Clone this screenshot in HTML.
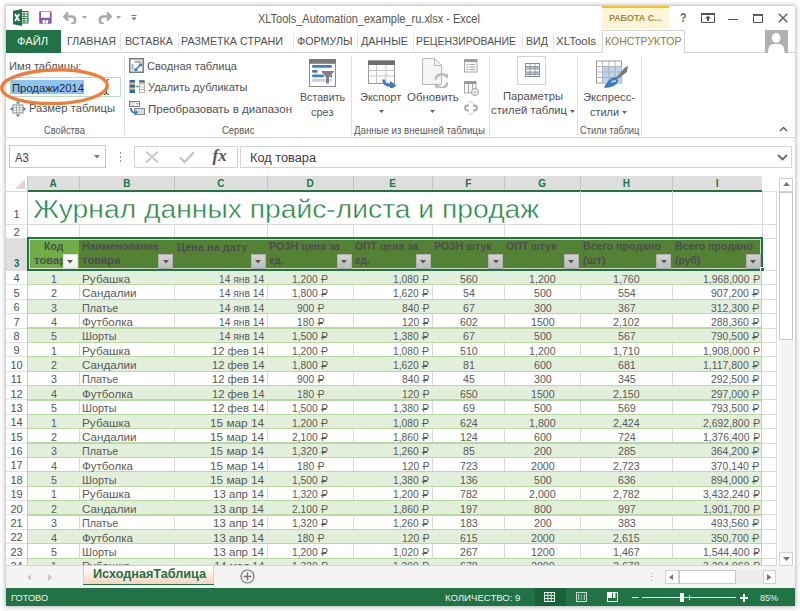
<!DOCTYPE html>
<html><head><meta charset="utf-8"><style>
html,body{margin:0;padding:0;}
body{width:800px;height:611px;overflow:hidden;position:relative;background:#fdfdfd;font-family:"Liberation Sans",sans-serif;}
body>div,body>span,body>svg{position:absolute;box-sizing:border-box;}
body>span{white-space:nowrap;transform-origin:0 0;}
.r{position:relative;font-style:normal;margin-left:0.09em;}
.r::after{content:"";position:absolute;left:-0.03em;top:0.6em;width:0.5em;height:0.085em;background:currentColor;}
</style></head><body>
<div style="left:6px;top:6px;width:789px;height:600px;background:#fff;box-shadow:0 0 4px 1px rgba(0,0,0,0.27);"></div>
<svg style="position:absolute;left:12px;top:9px" width="17" height="17" viewBox="0 0 17 17"><rect x="8.5" y="2.5" width="7.5" height="11.5" fill="#fff" stroke="#207245" stroke-width="1"/><path d="M9 5h7M9 7.3h7M9 9.6h7M9 11.9h7M12 2.5v11.5" stroke="#207245" stroke-width="0.9"/><path d="M1 1.8 L10 0 V17 L1 15.2Z" fill="#207245"/><path d="M3 5 L7.2 12 M7.2 5 L3 12" stroke="#fff" stroke-width="1.7"/></svg>
<svg style="position:absolute;left:39px;top:11px" width="13" height="13" viewBox="0 0 13 13"><rect x="0.2" y="0.2" width="12.4" height="12.6" rx="1.2" fill="#8a53b8"/><rect x="2" y="0.8" width="8.9" height="6" fill="#fff"/><path d="M3.4 9 H6 L6.2 12.6 H3.8Z M6.8 9 H9.4 L9 12.6 H6.6Z" fill="#fff"/></svg>
<svg style="position:absolute;left:63px;top:11px" width="15" height="13" viewBox="0 0 15 13"><path d="M5 1.5 L1.5 5.5 L5 9.5 M2 5.5 H9 A3.8 3.8 0 0 1 9 13 H8" fill="none" stroke="#a8a8a8" stroke-width="2.6"/></svg>
<svg style="position:absolute;left:82px;top:16px" width="5" height="3" viewBox="0 0 5 3"><path d="M0 0h5l-2.5 3z" fill="#a6a6a6"/></svg>
<svg style="position:absolute;left:97px;top:11px" width="15" height="13" viewBox="0 0 15 13"><path d="M10 1.5 L13.5 5.5 L10 9.5 M13 5.5 H6 A3.8 3.8 0 0 0 6 13 H7" fill="none" stroke="#a8a8a8" stroke-width="2.6"/></svg>
<svg style="position:absolute;left:116px;top:16px" width="5" height="3" viewBox="0 0 5 3"><path d="M0 0h5l-2.5 3z" fill="#a6a6a6"/></svg>
<svg style="position:absolute;left:131px;top:14px" width="6" height="7" viewBox="0 0 6 7"><path d="M0.5 1.5h5" stroke="#777" stroke-width="1"/><path d="M0.5 3.5h5l-2.5 3z" fill="#777"/></svg>
<span style="left:257.80px;top:11.59px;font-size:13px;line-height:13px;color:#555;transform:scaleX(0.8444);">XLTools_Automation_example_ru.xlsx - Excel</span>
<div style="left:601.5px;top:6px;width:67.5px;height:23px;background:#fdf5d8;border-top:2px solid #f1c31b;"></div>
<span style="left:608.50px;top:14.18px;font-size:9px;line-height:9px;color:#a3853a;font-weight:bold;transform:scaleX(0.9885);">РАБОТА С...</span>
<span style="left:680.00px;top:11.84px;font-size:12px;line-height:12px;color:#666;font-weight:bold;transform:scaleX(0.8867);">?</span>
<svg style="position:absolute;left:700.5px;top:13px" width="14" height="10" viewBox="0 0 14 10"><rect x="0.5" y="0.5" width="13" height="9" fill="none" stroke="#555"/><path d="M0.5 1.5h13" stroke="#555"/><path d="M7 2.5 L4 5.5 H6 V8 H8 V5.5 H10Z" fill="#555"/></svg>
<div style="left:728px;top:19px;width:9.5px;height:1.3000000000000007px;background:#555;"></div>
<svg style="position:absolute;left:753px;top:13.5px" width="10" height="9" viewBox="0 0 10 9"><rect x="0.5" y="0.5" width="9" height="8" fill="none" stroke="#555" stroke-width="1"/><path d="M0.5 1.2h9" stroke="#555" stroke-width="1.4"/></svg>
<svg style="position:absolute;left:778px;top:13px" width="10" height="10" viewBox="0 0 10 10"><path d="M0.8 0.8L9.2 9.2M9.2 0.8L0.8 9.2" stroke="#666" stroke-width="1.6"/></svg>
<div style="left:6px;top:52px;width:596px;height:1px;background:#d5d5d5;"></div>
<div style="left:684px;top:52px;width:111px;height:1px;background:#d5d5d5;"></div>
<div style="left:6px;top:29.8px;width:54.5px;height:22.999999999999996px;background:#217346;"></div>
<span style="left:17.20px;top:36.16px;font-size:11.5px;line-height:11.5px;color:#f4f8f5;transform:scaleX(0.9727);">ФАЙЛ</span>
<span style="left:67.00px;top:36.26px;font-size:11.5px;line-height:11.5px;color:#4e4e4e;transform:scaleX(0.9289);">ГЛАВНАЯ</span>
<span style="left:125.00px;top:36.26px;font-size:11.5px;line-height:11.5px;color:#4e4e4e;transform:scaleX(0.9308);">ВСТАВКА</span>
<span style="left:181.00px;top:36.26px;font-size:11.5px;line-height:11.5px;color:#4e4e4e;transform:scaleX(0.9330);">РАЗМЕТКА СТРАНИ</span>
<span style="left:296.50px;top:36.26px;font-size:11.5px;line-height:11.5px;color:#4e4e4e;transform:scaleX(0.9334);">ФОРМУЛЫ</span>
<span style="left:361.00px;top:36.26px;font-size:11.5px;line-height:11.5px;color:#4e4e4e;transform:scaleX(0.9415);">ДАННЫЕ</span>
<span style="left:416.00px;top:36.26px;font-size:11.5px;line-height:11.5px;color:#4e4e4e;transform:scaleX(0.9041);">РЕЦЕНЗИРОВАНИЕ</span>
<span style="left:526.00px;top:36.26px;font-size:11.5px;line-height:11.5px;color:#4e4e4e;transform:scaleX(0.9273);">ВИД</span>
<span style="left:556.00px;top:36.26px;font-size:11.5px;line-height:11.5px;color:#4e4e4e;transform:scaleX(0.9985);">XLTools</span>
<div style="left:120px;top:33px;width:1px;height:17px;background:#e3e3e3;"></div>
<div style="left:178px;top:33px;width:1px;height:17px;background:#e3e3e3;"></div>
<div style="left:292.5px;top:33px;width:1.0px;height:17px;background:#e3e3e3;"></div>
<div style="left:357px;top:33px;width:1px;height:17px;background:#e3e3e3;"></div>
<div style="left:412.5px;top:33px;width:1.0px;height:17px;background:#e3e3e3;"></div>
<div style="left:522px;top:33px;width:1px;height:17px;background:#e3e3e3;"></div>
<div style="left:552.5px;top:33px;width:1.0px;height:17px;background:#e3e3e3;"></div>
<div style="left:601.5px;top:29.5px;width:83.0px;height:23.5px;background:#fff;border:1px solid #d5d5d5;border-bottom:none;"></div>
<span style="left:604.75px;top:36.01px;font-size:11.8px;line-height:11.8px;color:#957a32;transform:scaleX(0.8949);">КОНСТРУКТОР</span>
<svg style="position:absolute;left:765px;top:29.5px" width="23" height="23" viewBox="0 0 23 23"><rect width="23" height="23" fill="#b1b1b1"/><ellipse cx="11.2" cy="8" rx="4.3" ry="5" fill="#fff"/><path d="M3 23 C3 16.5 5 14 9 14 H13.5 C17.5 14 19.5 16.5 19.5 23Z" fill="#fff"/></svg>
<div style="left:6px;top:137px;width:789px;height:1px;background:#d5d5d5;"></div>
<div style="left:123.5px;top:56px;width:1.0px;height:79px;background:#e1e1e1;"></div>
<div style="left:351px;top:56px;width:1px;height:79px;background:#e1e1e1;"></div>
<div style="left:488.5px;top:56px;width:1.0px;height:79px;background:#e1e1e1;"></div>
<div style="left:576.5px;top:56px;width:1.0px;height:79px;background:#e1e1e1;"></div>
<div style="left:640.5px;top:56px;width:1.0px;height:79px;background:#e1e1e1;"></div>
<span style="left:9.00px;top:61.29px;font-size:11px;line-height:11px;color:#525252;transform:scaleX(1.0162);">Имя таблицы:</span>
<div style="left:9.5px;top:77px;width:111.5px;height:20px;border:1px solid #b9dcc4;background:#fff;"></div>
<div style="left:10.5px;top:80px;width:73.5px;height:13.5px;background:#8fc4f2;"></div>
<span style="left:11.60px;top:81.58px;font-size:11.6px;line-height:11.6px;color:#1e2a3a;transform:scaleX(0.9710);">Продажи2014</span>
<span style="left:28.50px;top:103.49px;font-size:11px;line-height:11px;color:#525252;transform:scaleX(1.0193);">Размер таблицы</span>
<svg style="position:absolute;left:10px;top:101px" width="16" height="16" viewBox="0 0 16 16"><rect x="3" y="4" width="10" height="8" fill="#fff" stroke="#666" stroke-width="0.8"/><path d="M3 6.5h10M3 9h10M6.5 4v8M9.5 4v8" stroke="#888" stroke-width="0.6"/><path d="M8 0l2 2.5H6zM8 16l2-2.5H6zM0 8l2.5-2v4zM16 8l-2.5-2v4z" fill="#2e75b6"/></svg>
<span style="left:43.60px;top:125.96px;font-size:10.2px;line-height:10.2px;color:#5a5a5a;transform:scaleX(0.9132);">Свойства</span>
<svg style="position:absolute;left:103px;top:79px" width="7" height="16" viewBox="0 0 7 16"><path d="M1 0.5 Q3.5 0.5 3.5 2.5 Q3.5 0.5 6 0.5 M3.5 2.5V13.5 M1 15.5 Q3.5 15.5 3.5 13.5 Q3.5 15.5 6 15.5" fill="none" stroke="#333" stroke-width="1"/></svg>
<svg style="position:absolute;left:0px;top:66px" width="112" height="42" viewBox="0 0 112 42"><ellipse cx="54.5" cy="20.8" rx="52.8" ry="16.8" transform="rotate(-1.5 54.5 20.8)" fill="none" stroke="#ee7d3a" stroke-width="3.3"/></svg>
<span style="left:147.00px;top:60.89px;font-size:11px;line-height:11px;color:#525252;transform:scaleX(1.0114);">Сводная таблица</span>
<span style="left:147.50px;top:82.49px;font-size:11px;line-height:11px;color:#525252;transform:scaleX(1.0016);">Удалить дубликаты</span>
<span style="left:148.00px;top:103.59px;font-size:11px;line-height:11px;color:#525252;transform:scaleX(1.0452);">Преобразовать в диапазон</span>
<span style="left:221.60px;top:125.96px;font-size:10.2px;line-height:10.2px;color:#5a5a5a;transform:scaleX(0.9276);">Сервис</span>
<svg style="position:absolute;left:129px;top:58px" width="15" height="15" viewBox="0 0 15 15"><rect x="0.75" y="0.75" width="13.5" height="13.5" fill="#fff" stroke="#7a7a7a" stroke-width="1.5"/><rect x="5.5" y="2.5" width="7" height="2.5" fill="#b3b3b3"/><rect x="2.5" y="6" width="2" height="6.5" fill="#b3b3b3"/><path d="M6.5 12 L11.5 6.5" stroke="#2e75b6" stroke-width="1.4"/><path d="M5.5 9.5 L5.5 13 L9 13Z M9.5 5.5 L13 5.5 L13 9Z" fill="#2e75b6"/></svg>
<svg style="position:absolute;left:129px;top:80px" width="16" height="13" viewBox="0 0 16 13"><rect x="0.5" y="0" width="5.5" height="13" fill="#2f6db3"/><rect x="0.5" y="2.6" width="5.5" height="2" fill="#f4c064"/><rect x="0.5" y="7.6" width="5.5" height="2" fill="#f4c064"/><rect x="10.3" y="0.3" width="5.2" height="12.4" fill="#fff" stroke="#8a8a8a" stroke-width="0.6"/><rect x="10.3" y="0.3" width="5.2" height="2.4" fill="#2f6db3"/><rect x="10.3" y="2.7" width="5.2" height="2" fill="#f4c064"/><path d="M10.3 7h5.2M10.3 9.5h5.2" stroke="#8a8a8a" stroke-width="0.6"/><path d="M6.5 6.5h3" stroke="#2e75b6" stroke-width="0.8"/><path d="M9.8 6.5 L8.3 5.3 V7.7Z" fill="#2e75b6"/></svg>
<svg style="position:absolute;left:129px;top:101px" width="16" height="14" viewBox="0 0 16 14"><rect x="0.5" y="0.5" width="10" height="5" fill="#fff" stroke="#7a7a7a"/><rect x="1.2" y="1.2" width="4.5" height="3.6" fill="#c9dcf0"/><path d="M7 2.3h2.5L8.25 3.8Z" fill="#555"/><rect x="5.5" y="7.5" width="10" height="6" fill="#c9dcf0" stroke="#8a8a8a"/><path d="M2 7 Q2 12.5 7.5 11.5" fill="none" stroke="#2e75b6" stroke-width="1.8"/><path d="M9 11.3 L6.5 9 L6.5 13.8Z" fill="#2e75b6"/></svg>
<svg style="position:absolute;left:309px;top:59px" width="27" height="28" viewBox="0 0 27 28"><rect x="0.5" y="0.5" width="26" height="27" fill="#fff" stroke="#8c8c8c"/><rect x="0" y="0" width="27" height="4.8" fill="#7a7a7a"/><rect x="3" y="6" width="20" height="2.8" rx="1.2" fill="#3f7cc2"/><rect x="3" y="11" width="5.5" height="2.8" rx="1.2" fill="#3f7cc2"/><rect x="3" y="15.5" width="12" height="2.8" rx="1.2" fill="#3f7cc2"/><rect x="21" y="15.5" width="2" height="2.8" fill="#3f7cc2"/><rect x="3" y="20" width="20" height="2.8" rx="1.2" fill="#bcd2ec"/><path d="M10.5 11.5 H26 L20.5 18 V25 H16.5 V18 Z" fill="#fff"/><path d="M12 12 H25.5 L20 18.3 V24.5 H17 V18.3 Z" fill="#808080"/></svg>
<span style="left:300.10px;top:92.43px;font-size:11.3px;line-height:11.3px;color:#525252;transform:scaleX(0.9416);">Вставить</span>
<span style="left:311.40px;top:106.73px;font-size:11.3px;line-height:11.3px;color:#525252;transform:scaleX(0.9718);">срез</span>
<svg style="position:absolute;left:367px;top:60px" width="31" height="28" viewBox="0 0 31 28"><rect x="1.5" y="1" width="26" height="22.5" fill="#fff" stroke="#9a9a9a"/><rect x="1" y="0.5" width="27" height="4.5" fill="#6d6d6d"/><path d="M1.5 10.5h26M1.5 16h26M9.5 5v18.5M19 5v18.5" stroke="#c4c4c4" stroke-width="1"/><path d="M16.5 19.5 Q17 25.5 24 25.5" fill="none" stroke="#3b7dc4" stroke-width="3"/><path d="M23 21 L29.5 25.5 L23 30Z" fill="#3b7dc4"/></svg>
<span style="left:360.30px;top:92.43px;font-size:11.3px;line-height:11.3px;color:#525252;transform:scaleX(0.9704);">Экспорт</span>
<svg style="position:absolute;left:378.7px;top:110px" width="5" height="3" viewBox="0 0 5 3"><path d="M0 0h5l-2.5 3z" fill="#666"/></svg>
<svg style="position:absolute;left:422px;top:58px" width="26" height="30" viewBox="0 0 26 30"><path d="M0.5 0.5 H12.5 L19.5 7.5 V26.5 H0.5Z" fill="#f6f4f8" stroke="#b8b8b8"/><path d="M12.5 0.5V7.5H19.5" fill="none" stroke="#b8b8b8"/><path d="M13.5 21.5 A6 6 0 0 1 24.5 19" fill="none" stroke="#bdbdbd" stroke-width="2.6"/><path d="M25.5 24 A6 6 0 0 1 14.5 27" fill="none" stroke="#bdbdbd" stroke-width="2.6"/><path d="M22 17 L26 15.5 L26 21Z M17 29 L13 30 L13 24.5Z" fill="#bdbdbd"/></svg>
<span style="left:406.70px;top:92.43px;font-size:11.3px;line-height:11.3px;color:#525252;transform:scaleX(1.0124);">Обновить</span>
<svg style="position:absolute;left:429.8px;top:110px" width="5" height="3" viewBox="0 0 5 3"><path d="M0 0h5l-2.5 3z" fill="#666"/></svg>
<svg style="position:absolute;left:464px;top:59px" width="14" height="14" viewBox="0 0 14 14"><rect x="0.5" y="0.5" width="12.5" height="12.5" fill="#f7f7f7" stroke="#a8a8a8"/><rect x="0.5" y="0.5" width="12.5" height="2.5" fill="#9a9a9a"/><path d="M2.5 5.5h1.5M2.5 8h1.5M2.5 10.5h1.5M5.5 5.5h5.5M5.5 8h5.5M5.5 10.5h5.5" stroke="#a8a8a8" stroke-width="1"/></svg>
<svg style="position:absolute;left:464px;top:81px" width="15" height="15" viewBox="0 0 15 15"><rect x="0.5" y="0.5" width="11.5" height="11.5" fill="#f7f7f7" stroke="#a8a8a8"/><rect x="0.5" y="0.5" width="11.5" height="2.5" fill="#9a9a9a"/><path d="M4.5 3v9M8.5 3v9" stroke="#a8a8a8"/><circle cx="11" cy="11" r="3.5" fill="#fff" stroke="#a0a0a0"/><path d="M7.5 11h7M11 7.5v7" stroke="#b0b0b0" stroke-width="0.7"/></svg>
<svg style="position:absolute;left:464px;top:100px" width="14" height="16" viewBox="0 0 14 16"><path d="M5 5.5 H3.5 A2.5 2.5 0 0 0 3.5 10.5 H5 M9 5.5 H10.5 A2.5 2.5 0 0 1 10.5 10.5 H9" fill="none" stroke="#a8a8a8" stroke-width="1.8"/><path d="M4 1.5l1.5 2M7 0.5v2.5M10 1.5l-1.5 2M4 14.5l1.5-2M7 15.5v-2.5M10 14.5l-1.5-2" stroke="#b5b5b5" stroke-width="0.8"/></svg>
<span style="left:354.00px;top:125.96px;font-size:10.2px;line-height:10.2px;color:#5a5a5a;transform:scaleX(0.9488);">Данные из внешней таблицы</span>
<div style="left:517.3px;top:56px;width:28.5px;height:28.5px;border:1px solid #d4d4d4;background:#fff;"></div>
<svg style="position:absolute;left:525px;top:63px" width="15" height="14" viewBox="0 0 15 14"><rect x="0.5" y="0.5" width="14" height="13" fill="#fff" stroke="#8a8a8a"/><rect x="0.5" y="3.5" width="14" height="2.5" fill="#a9c6e8"/><rect x="0.5" y="9" width="14" height="2.5" fill="#a9c6e8"/><path d="M0.5 3.5h14M0.5 6h14M0.5 9h14M0.5 11.5h14M5 0.5v13M10 0.5v13" stroke="#8a8a8a" stroke-width="0.8"/></svg>
<span style="left:503.00px;top:91.03px;font-size:11.3px;line-height:11.3px;color:#525252;transform:scaleX(0.9961);">Параметры</span>
<span style="left:491.00px;top:105.43px;font-size:11.3px;line-height:11.3px;color:#525252;transform:scaleX(0.9981);">стилей таблиц</span>
<svg style="position:absolute;left:569.5px;top:109.5px" width="5" height="3" viewBox="0 0 5 3"><path d="M0 0h5l-2.5 3z" fill="#666"/></svg>
<svg style="position:absolute;left:596px;top:60px" width="33" height="29" viewBox="0 0 33 29"><rect x="0.5" y="1" width="25" height="22" fill="#fff" stroke="#9a9a9a"/><rect x="6.5" y="6.5" width="19" height="16.5" fill="#bdd5ee"/><path d="M0.5 6.5h25M0.5 12h25M0.5 17.5h25M6.5 1v22M12.8 1v22M19.1 1v22" stroke="#a8a8a8" stroke-width="0.8"/><path d="M28 8.5 L32 5.5 L31 12 L21 19.5 L19.5 18Z" fill="#7a7a7a"/><path d="M19 17 L22.5 20.5 Q20 28 8 28 Q12 18 19 17Z" fill="#3b7dc4"/><path d="M15.5 22.5 Q17.5 20 20 21.5" fill="none" stroke="#fff" stroke-width="1.2"/></svg>
<span style="left:582.60px;top:92.43px;font-size:11.3px;line-height:11.3px;color:#525252;transform:scaleX(0.9887);">Экспресс-</span>
<span style="left:590.00px;top:107.43px;font-size:11.3px;line-height:11.3px;color:#525252;transform:scaleX(0.9653);">стили</span>
<svg style="position:absolute;left:622px;top:111px" width="5" height="3" viewBox="0 0 5 3"><path d="M0 0h5l-2.5 3z" fill="#666"/></svg>
<span style="left:580.00px;top:125.96px;font-size:10.2px;line-height:10.2px;color:#5a5a5a;transform:scaleX(0.9093);">Стили таблиц</span>
<svg style="position:absolute;left:779px;top:126px" width="9" height="6" viewBox="0 0 9 6"><path d="M1 5L4.5 1.5L8 5" fill="none" stroke="#555" stroke-width="1.3"/></svg>
<div style="left:9.4px;top:145.3px;width:96.39999999999999px;height:22.5px;border:1px solid #c6c6c6;background:#fff;"></div>
<span style="left:14.60px;top:151.74px;font-size:12px;line-height:12px;color:#444;transform:scaleX(0.9470);">A3</span>
<svg style="position:absolute;left:93.5px;top:155px" width="6" height="3.5" viewBox="0 0 6 3.5"><path d="M0 0h6l-3 3.5z" fill="#777"/></svg>
<div style="left:119.5px;top:152px;width:1.5px;height:1.5px;background:#999;"></div>
<div style="left:119.5px;top:156px;width:1.5px;height:1.5px;background:#999;"></div>
<div style="left:119.5px;top:160px;width:1.5px;height:1.5px;background:#999;"></div>
<div style="left:134px;top:145.5px;width:103.5px;height:22.0px;border:1px solid #d5d5d5;background:#fff;"></div>
<svg style="position:absolute;left:145px;top:151px" width="14" height="12" viewBox="0 0 14 12"><path d="M1 0.5L13 11.5M13 0.5L1 11.5" stroke="#c6c6c6" stroke-width="1.9"/></svg>
<svg style="position:absolute;left:179px;top:151px" width="16" height="13" viewBox="0 0 16 13"><path d="M1 6.5L5.5 11L15 1" fill="none" stroke="#c6c6c6" stroke-width="2.3"/></svg>
<span style="left:212.5px;top:146px;font-family:'Liberation Serif',serif;font-style:italic;font-weight:bold;font-size:17px;line-height:20px;color:#555;">fx</span>
<div style="left:240px;top:145.5px;width:552px;height:22.0px;border:1px solid #d5d5d5;background:#fff;"></div>
<span style="left:250.00px;top:151.94px;font-size:12px;line-height:12px;color:#3c3c3c;transform:scaleX(1.0639);">Код товара</span>
<svg style="position:absolute;left:777px;top:154px" width="11" height="7" viewBox="0 0 11 7"><path d="M1 1L5.5 5.5L10 1" fill="none" stroke="#666" stroke-width="1.8"/></svg>
<div style="left:27px;top:176px;width:735px;height:14px;background:#dedede;"></div>
<div style="left:78.5px;top:176px;width:1.0px;height:14px;background:#c4c4c4;"></div>
<div style="left:174.0px;top:176px;width:1.0px;height:14px;background:#c4c4c4;"></div>
<div style="left:266.5px;top:176px;width:1.0px;height:14px;background:#c4c4c4;"></div>
<div style="left:352.5px;top:176px;width:1.0px;height:14px;background:#c4c4c4;"></div>
<div style="left:431.5px;top:176px;width:1.0px;height:14px;background:#c4c4c4;"></div>
<div style="left:504.0px;top:176px;width:1.0px;height:14px;background:#c4c4c4;"></div>
<div style="left:579.5px;top:176px;width:1.0px;height:14px;background:#c4c4c4;"></div>
<div style="left:672.0px;top:176px;width:1.0px;height:14px;background:#c4c4c4;"></div>
<div style="left:27px;top:190px;width:735px;height:2px;background:#217346;"></div>
<div style="left:762px;top:176px;width:14px;height:15px;background:#fff;"></div>
<div style="left:762px;top:190.5px;width:14px;height:1.0px;background:#e1e1e1;"></div>
<span style="left:49.39px;top:178.53px;font-size:10px;line-height:10px;color:#217346;font-weight:bold;">A</span>
<span style="left:123.14px;top:178.53px;font-size:10px;line-height:10px;color:#217346;font-weight:bold;">B</span>
<span style="left:217.14px;top:178.53px;font-size:10px;line-height:10px;color:#217346;font-weight:bold;">C</span>
<span style="left:306.39px;top:178.53px;font-size:10px;line-height:10px;color:#217346;font-weight:bold;">D</span>
<span style="left:389.16px;top:178.53px;font-size:10px;line-height:10px;color:#217346;font-weight:bold;">E</span>
<span style="left:465.20px;top:178.53px;font-size:10px;line-height:10px;color:#217346;font-weight:bold;">F</span>
<span style="left:538.36px;top:178.53px;font-size:10px;line-height:10px;color:#217346;font-weight:bold;">G</span>
<span style="left:622.64px;top:178.53px;font-size:10px;line-height:10px;color:#217346;font-weight:bold;">H</span>
<span style="left:715.86px;top:178.53px;font-size:10px;line-height:10px;color:#217346;font-weight:bold;">I</span>
<div style="left:6px;top:190.5px;width:21px;height:1.0px;background:#dadada;"></div>
<svg style="position:absolute;left:15px;top:179px" width="10" height="10" viewBox="0 0 10 10"><path d="M10 0V10H0Z" fill="#d9d9d9"/></svg>
<div style="left:26.5px;top:176px;width:1.0px;height:389.5px;background:#c6c6c6;"></div>
<div style="left:6px;top:238px;width:20.5px;height:32.5px;background:#dedede;"></div>
<div style="left:6px;top:223.5px;width:20.5px;height:1.0px;background:#e3e3e3;"></div>
<span style="left:13.44px;top:208.89px;font-size:11px;line-height:11px;color:#505050;">1</span>
<div style="left:6px;top:237.5px;width:20.5px;height:1.0px;background:#e3e3e3;"></div>
<span style="left:13.44px;top:226.59px;font-size:11px;line-height:11px;color:#505050;">2</span>
<span style="left:13.91px;top:258.29px;font-size:11px;line-height:11px;color:#217346;font-weight:bold;transform:scaleX(0.8800);">3</span>
<div style="left:6px;top:284.38px;width:20.5px;height:1.0px;background:#e3e3e3;"></div>
<span style="left:13.44px;top:273.47px;font-size:11px;line-height:11px;color:#505050;">4</span>
<div style="left:6px;top:298.76px;width:20.5px;height:1.0px;background:#e3e3e3;"></div>
<span style="left:13.44px;top:287.85px;font-size:11px;line-height:11px;color:#505050;">5</span>
<div style="left:6px;top:313.14px;width:20.5px;height:1.0px;background:#e3e3e3;"></div>
<span style="left:13.44px;top:302.23px;font-size:11px;line-height:11px;color:#505050;">6</span>
<div style="left:6px;top:327.52px;width:20.5px;height:1.0px;background:#e3e3e3;"></div>
<span style="left:13.44px;top:316.61px;font-size:11px;line-height:11px;color:#505050;">7</span>
<div style="left:6px;top:341.9px;width:20.5px;height:1.0px;background:#e3e3e3;"></div>
<span style="left:13.44px;top:330.99px;font-size:11px;line-height:11px;color:#505050;">8</span>
<div style="left:6px;top:356.28px;width:20.5px;height:1.0px;background:#e3e3e3;"></div>
<span style="left:13.44px;top:345.37px;font-size:11px;line-height:11px;color:#505050;">9</span>
<div style="left:6px;top:370.66px;width:20.5px;height:1.0px;background:#e3e3e3;"></div>
<span style="left:10.38px;top:359.75px;font-size:11px;line-height:11px;color:#505050;">10</span>
<div style="left:6px;top:385.04px;width:20.5px;height:1.0px;background:#e3e3e3;"></div>
<span style="left:10.79px;top:374.13px;font-size:11px;line-height:11px;color:#505050;">11</span>
<div style="left:6px;top:399.42px;width:20.5px;height:1.0px;background:#e3e3e3;"></div>
<span style="left:10.38px;top:388.51px;font-size:11px;line-height:11px;color:#505050;">12</span>
<div style="left:6px;top:413.8px;width:20.5px;height:1.0px;background:#e3e3e3;"></div>
<span style="left:10.38px;top:402.89px;font-size:11px;line-height:11px;color:#505050;">13</span>
<div style="left:6px;top:428.18px;width:20.5px;height:1.0px;background:#e3e3e3;"></div>
<span style="left:10.38px;top:417.27px;font-size:11px;line-height:11px;color:#505050;">14</span>
<div style="left:6px;top:442.56px;width:20.5px;height:1.0px;background:#e3e3e3;"></div>
<span style="left:10.38px;top:431.65px;font-size:11px;line-height:11px;color:#505050;">15</span>
<div style="left:6px;top:456.94px;width:20.5px;height:1.0px;background:#e3e3e3;"></div>
<span style="left:10.38px;top:446.03px;font-size:11px;line-height:11px;color:#505050;">16</span>
<div style="left:6px;top:471.32000000000005px;width:20.5px;height:1.0px;background:#e3e3e3;"></div>
<span style="left:10.38px;top:460.41px;font-size:11px;line-height:11px;color:#505050;">17</span>
<div style="left:6px;top:485.70000000000005px;width:20.5px;height:1.0px;background:#e3e3e3;"></div>
<span style="left:10.38px;top:474.79px;font-size:11px;line-height:11px;color:#505050;">18</span>
<div style="left:6px;top:500.08000000000004px;width:20.5px;height:1.0px;background:#e3e3e3;"></div>
<span style="left:10.38px;top:489.17px;font-size:11px;line-height:11px;color:#505050;">19</span>
<div style="left:6px;top:514.46px;width:20.5px;height:1.0px;background:#e3e3e3;"></div>
<span style="left:10.38px;top:503.55px;font-size:11px;line-height:11px;color:#505050;">20</span>
<div style="left:6px;top:528.84px;width:20.5px;height:1.0px;background:#e3e3e3;"></div>
<span style="left:10.38px;top:517.93px;font-size:11px;line-height:11px;color:#505050;">21</span>
<div style="left:6px;top:543.22px;width:20.5px;height:1.0px;background:#e3e3e3;"></div>
<span style="left:10.38px;top:532.31px;font-size:11px;line-height:11px;color:#505050;">22</span>
<div style="left:6px;top:557.6px;width:20.5px;height:1.0px;background:#e3e3e3;"></div>
<span style="left:10.38px;top:546.69px;font-size:11px;line-height:11px;color:#505050;">23</span>
<div style="left:6px;top:571.98px;width:20.5px;height:1.0px;background:#e3e3e3;"></div>
<span style="left:10.38px;top:561.07px;font-size:11px;line-height:11px;color:#505050;">24</span>
<div style="left:27px;top:223.5px;width:749px;height:1.0px;background:#d9d9d9;"></div>
<div style="left:27px;top:237.5px;width:749px;height:1.0px;background:#d9d9d9;"></div>
<div style="left:579.5px;top:191px;width:1.0px;height:33px;background:#d9d9d9;"></div>
<div style="left:672.0px;top:191px;width:1.0px;height:33px;background:#d9d9d9;"></div>
<div style="left:761.5px;top:191px;width:1.0px;height:33px;background:#d9d9d9;"></div>
<div style="left:775.5px;top:191px;width:1.0px;height:33px;background:#d9d9d9;"></div>
<div style="left:78.5px;top:224px;width:1.0px;height:14px;background:#d9d9d9;"></div>
<div style="left:174.0px;top:224px;width:1.0px;height:14px;background:#d9d9d9;"></div>
<div style="left:266.5px;top:224px;width:1.0px;height:14px;background:#d9d9d9;"></div>
<div style="left:352.5px;top:224px;width:1.0px;height:14px;background:#d9d9d9;"></div>
<div style="left:431.5px;top:224px;width:1.0px;height:14px;background:#d9d9d9;"></div>
<div style="left:504.0px;top:224px;width:1.0px;height:14px;background:#d9d9d9;"></div>
<div style="left:579.5px;top:224px;width:1.0px;height:14px;background:#d9d9d9;"></div>
<div style="left:672.0px;top:224px;width:1.0px;height:14px;background:#d9d9d9;"></div>
<div style="left:761.5px;top:224px;width:1.0px;height:14px;background:#d9d9d9;"></div>
<div style="left:775.5px;top:224px;width:1.0px;height:14px;background:#d9d9d9;"></div>
<div style="left:775.5px;top:238px;width:1.0px;height:327.5px;background:#d9d9d9;"></div>
<div style="left:762px;top:270.0px;width:14px;height:1.0px;background:#d9d9d9;"></div>
<div style="left:762px;top:284.38px;width:14px;height:1.0px;background:#d9d9d9;"></div>
<div style="left:762px;top:298.76px;width:14px;height:1.0px;background:#d9d9d9;"></div>
<div style="left:762px;top:313.14px;width:14px;height:1.0px;background:#d9d9d9;"></div>
<div style="left:762px;top:327.52px;width:14px;height:1.0px;background:#d9d9d9;"></div>
<div style="left:762px;top:341.9px;width:14px;height:1.0px;background:#d9d9d9;"></div>
<div style="left:762px;top:356.28px;width:14px;height:1.0px;background:#d9d9d9;"></div>
<div style="left:762px;top:370.66px;width:14px;height:1.0px;background:#d9d9d9;"></div>
<div style="left:762px;top:385.04px;width:14px;height:1.0px;background:#d9d9d9;"></div>
<div style="left:762px;top:399.42px;width:14px;height:1.0px;background:#d9d9d9;"></div>
<div style="left:762px;top:413.8px;width:14px;height:1.0px;background:#d9d9d9;"></div>
<div style="left:762px;top:428.18px;width:14px;height:1.0px;background:#d9d9d9;"></div>
<div style="left:762px;top:442.56px;width:14px;height:1.0px;background:#d9d9d9;"></div>
<div style="left:762px;top:456.94px;width:14px;height:1.0px;background:#d9d9d9;"></div>
<div style="left:762px;top:471.32000000000005px;width:14px;height:1.0px;background:#d9d9d9;"></div>
<div style="left:762px;top:485.70000000000005px;width:14px;height:1.0px;background:#d9d9d9;"></div>
<div style="left:762px;top:500.08000000000004px;width:14px;height:1.0px;background:#d9d9d9;"></div>
<div style="left:762px;top:514.46px;width:14px;height:1.0px;background:#d9d9d9;"></div>
<div style="left:762px;top:528.84px;width:14px;height:1.0px;background:#d9d9d9;"></div>
<div style="left:762px;top:543.22px;width:14px;height:1.0px;background:#d9d9d9;"></div>
<div style="left:762px;top:557.6px;width:14px;height:1.0px;background:#d9d9d9;"></div>
<span style="left:32.75px;top:196.09px;font-size:26px;line-height:26px;color:#238548;transform:scaleX(1.0870);-webkit-text-stroke:0.45px #fff;">Журнал данных прайс-листа и продаж</span>
<div style="left:28px;top:239px;width:51px;height:30.5px;background:#70ad47;"></div>
<div style="left:79px;top:239px;width:682px;height:30.5px;background:#548235;"></div>
<div style="left:26.5px;top:237px;width:736.0px;height:34px;border:2px solid #217346;"></div>
<div style="left:28.5px;top:239px;width:732.0px;height:30px;border:1px solid rgba(255,255,255,0.7);"></div>
<span style="left:43.75px;top:241.93px;font-size:10px;line-height:10px;color:#4d4d4d;font-weight:bold;transform:scaleX(1.0500);">Код</span>
<span style="left:34.40px;top:256.03px;font-size:10px;line-height:10px;color:#4d4d4d;font-weight:bold;transform:scaleX(1.1312);">товара</span>
<span style="left:81.90px;top:241.93px;font-size:10px;line-height:10px;color:#4d4d4d;font-weight:bold;transform:scaleX(1.0509);">Наименование</span>
<span style="left:81.50px;top:256.03px;font-size:10px;line-height:10px;color:#4d4d4d;font-weight:bold;transform:scaleX(1.1283);">товара</span>
<span style="left:177.20px;top:242.83px;font-size:10px;line-height:10px;color:#4d4d4d;font-weight:bold;transform:scaleX(1.0953);">Цена на дату</span>
<span style="left:269.00px;top:241.93px;font-size:10px;line-height:10px;color:#4d4d4d;font-weight:bold;transform:scaleX(1.0586);">РОЗН цена за</span>
<span style="left:269.00px;top:256.03px;font-size:10px;line-height:10px;color:#4d4d4d;font-weight:bold;transform:scaleX(0.9804);">ед.</span>
<span style="left:355.00px;top:241.93px;font-size:10px;line-height:10px;color:#4d4d4d;font-weight:bold;transform:scaleX(1.0440);">ОПТ цена за</span>
<span style="left:355.00px;top:256.03px;font-size:10px;line-height:10px;color:#4d4d4d;font-weight:bold;transform:scaleX(0.9804);">ед.</span>
<span style="left:434.00px;top:241.93px;font-size:10px;line-height:10px;color:#4d4d4d;font-weight:bold;transform:scaleX(1.0544);">РОЗН штук</span>
<span style="left:506.20px;top:241.93px;font-size:10px;line-height:10px;color:#4d4d4d;font-weight:bold;transform:scaleX(1.0522);">ОПТ штук</span>
<span style="left:582.60px;top:241.93px;font-size:10px;line-height:10px;color:#4d4d4d;font-weight:bold;transform:scaleX(1.0620);">Всего продано</span>
<span style="left:582.60px;top:256.03px;font-size:10px;line-height:10px;color:#4d4d4d;font-weight:bold;transform:scaleX(1.1260);">(шт)</span>
<span style="left:674.70px;top:241.93px;font-size:10px;line-height:10px;color:#4d4d4d;font-weight:bold;transform:scaleX(1.0620);">Всего продано</span>
<span style="left:674.70px;top:256.03px;font-size:10px;line-height:10px;color:#4d4d4d;font-weight:bold;transform:scaleX(1.0379);">(руб)</span>
<div style="left:62.5px;top:253.5px;width:15.0px;height:15.0px;background:linear-gradient(#ffffff,#ececec);border:1px solid #e0e0e0;"></div>
<svg style="position:absolute;left:67.0px;top:259.5px" width="6" height="4" viewBox="0 0 6 4"><path d="M0 0h6l-3 3.5z" fill="#555"/></svg>
<div style="left:158.0px;top:253.5px;width:15.0px;height:15.0px;background:linear-gradient(#d2d2d2,#bcbcbc);border:1px solid #b0b0b0;"></div>
<svg style="position:absolute;left:162.5px;top:259.5px" width="6" height="4" viewBox="0 0 6 4"><path d="M0 0h6l-3 3.5z" fill="#555"/></svg>
<div style="left:250.5px;top:253.5px;width:15.0px;height:15.0px;background:linear-gradient(#d2d2d2,#bcbcbc);border:1px solid #b0b0b0;"></div>
<svg style="position:absolute;left:255.0px;top:259.5px" width="6" height="4" viewBox="0 0 6 4"><path d="M0 0h6l-3 3.5z" fill="#555"/></svg>
<div style="left:336.5px;top:253.5px;width:15.0px;height:15.0px;background:linear-gradient(#d2d2d2,#bcbcbc);border:1px solid #b0b0b0;"></div>
<svg style="position:absolute;left:341.0px;top:259.5px" width="6" height="4" viewBox="0 0 6 4"><path d="M0 0h6l-3 3.5z" fill="#555"/></svg>
<div style="left:415.5px;top:253.5px;width:15.0px;height:15.0px;background:linear-gradient(#d2d2d2,#bcbcbc);border:1px solid #b0b0b0;"></div>
<svg style="position:absolute;left:420.0px;top:259.5px" width="6" height="4" viewBox="0 0 6 4"><path d="M0 0h6l-3 3.5z" fill="#555"/></svg>
<div style="left:488.0px;top:253.5px;width:15.0px;height:15.0px;background:linear-gradient(#d2d2d2,#bcbcbc);border:1px solid #b0b0b0;"></div>
<svg style="position:absolute;left:492.5px;top:259.5px" width="6" height="4" viewBox="0 0 6 4"><path d="M0 0h6l-3 3.5z" fill="#555"/></svg>
<div style="left:563.5px;top:253.5px;width:15.0px;height:15.0px;background:linear-gradient(#d2d2d2,#bcbcbc);border:1px solid #b0b0b0;"></div>
<svg style="position:absolute;left:568.0px;top:259.5px" width="6" height="4" viewBox="0 0 6 4"><path d="M0 0h6l-3 3.5z" fill="#555"/></svg>
<div style="left:656.0px;top:253.5px;width:15.0px;height:15.0px;background:linear-gradient(#d2d2d2,#bcbcbc);border:1px solid #b0b0b0;"></div>
<svg style="position:absolute;left:660.5px;top:259.5px" width="6" height="4" viewBox="0 0 6 4"><path d="M0 0h6l-3 3.5z" fill="#555"/></svg>
<div style="left:745.5px;top:253.5px;width:15.0px;height:15.0px;background:linear-gradient(#d2d2d2,#bcbcbc);border:1px solid #b0b0b0;"></div>
<svg style="position:absolute;left:750.0px;top:259.5px" width="6" height="4" viewBox="0 0 6 4"><path d="M0 0h6l-3 3.5z" fill="#555"/></svg>
<div style="left:759.5px;top:267px;width:5.0px;height:5px;background:#217346;border:1px solid #fff;"></div>
<div style="left:27.5px;top:270.5px;width:734.0px;height:14.379999999999995px;background:#e2efda;"></div>
<div style="left:78.5px;top:284.88px;width:1.0px;height:14.379999999999995px;background:#d9d9d9;"></div>
<div style="left:174.0px;top:284.88px;width:1.0px;height:14.379999999999995px;background:#d9d9d9;"></div>
<div style="left:266.5px;top:284.88px;width:1.0px;height:14.379999999999995px;background:#d9d9d9;"></div>
<div style="left:352.5px;top:284.88px;width:1.0px;height:14.379999999999995px;background:#d9d9d9;"></div>
<div style="left:431.5px;top:284.88px;width:1.0px;height:14.379999999999995px;background:#d9d9d9;"></div>
<div style="left:504.0px;top:284.88px;width:1.0px;height:14.379999999999995px;background:#d9d9d9;"></div>
<div style="left:579.5px;top:284.88px;width:1.0px;height:14.379999999999995px;background:#d9d9d9;"></div>
<div style="left:672.0px;top:284.88px;width:1.0px;height:14.379999999999995px;background:#d9d9d9;"></div>
<div style="left:27.5px;top:299.26px;width:734.0px;height:14.379999999999995px;background:#e2efda;"></div>
<div style="left:78.5px;top:313.64px;width:1.0px;height:14.379999999999995px;background:#d9d9d9;"></div>
<div style="left:174.0px;top:313.64px;width:1.0px;height:14.379999999999995px;background:#d9d9d9;"></div>
<div style="left:266.5px;top:313.64px;width:1.0px;height:14.379999999999995px;background:#d9d9d9;"></div>
<div style="left:352.5px;top:313.64px;width:1.0px;height:14.379999999999995px;background:#d9d9d9;"></div>
<div style="left:431.5px;top:313.64px;width:1.0px;height:14.379999999999995px;background:#d9d9d9;"></div>
<div style="left:504.0px;top:313.64px;width:1.0px;height:14.379999999999995px;background:#d9d9d9;"></div>
<div style="left:579.5px;top:313.64px;width:1.0px;height:14.379999999999995px;background:#d9d9d9;"></div>
<div style="left:672.0px;top:313.64px;width:1.0px;height:14.379999999999995px;background:#d9d9d9;"></div>
<div style="left:27.5px;top:328.02px;width:734.0px;height:14.379999999999995px;background:#e2efda;"></div>
<div style="left:78.5px;top:342.4px;width:1.0px;height:14.379999999999995px;background:#d9d9d9;"></div>
<div style="left:174.0px;top:342.4px;width:1.0px;height:14.379999999999995px;background:#d9d9d9;"></div>
<div style="left:266.5px;top:342.4px;width:1.0px;height:14.379999999999995px;background:#d9d9d9;"></div>
<div style="left:352.5px;top:342.4px;width:1.0px;height:14.379999999999995px;background:#d9d9d9;"></div>
<div style="left:431.5px;top:342.4px;width:1.0px;height:14.379999999999995px;background:#d9d9d9;"></div>
<div style="left:504.0px;top:342.4px;width:1.0px;height:14.379999999999995px;background:#d9d9d9;"></div>
<div style="left:579.5px;top:342.4px;width:1.0px;height:14.379999999999995px;background:#d9d9d9;"></div>
<div style="left:672.0px;top:342.4px;width:1.0px;height:14.379999999999995px;background:#d9d9d9;"></div>
<div style="left:27.5px;top:356.78px;width:734.0px;height:14.380000000000052px;background:#e2efda;"></div>
<div style="left:78.5px;top:371.16px;width:1.0px;height:14.379999999999995px;background:#d9d9d9;"></div>
<div style="left:174.0px;top:371.16px;width:1.0px;height:14.379999999999995px;background:#d9d9d9;"></div>
<div style="left:266.5px;top:371.16px;width:1.0px;height:14.379999999999995px;background:#d9d9d9;"></div>
<div style="left:352.5px;top:371.16px;width:1.0px;height:14.379999999999995px;background:#d9d9d9;"></div>
<div style="left:431.5px;top:371.16px;width:1.0px;height:14.379999999999995px;background:#d9d9d9;"></div>
<div style="left:504.0px;top:371.16px;width:1.0px;height:14.379999999999995px;background:#d9d9d9;"></div>
<div style="left:579.5px;top:371.16px;width:1.0px;height:14.379999999999995px;background:#d9d9d9;"></div>
<div style="left:672.0px;top:371.16px;width:1.0px;height:14.379999999999995px;background:#d9d9d9;"></div>
<div style="left:27.5px;top:385.54px;width:734.0px;height:14.379999999999995px;background:#e2efda;"></div>
<div style="left:78.5px;top:399.92px;width:1.0px;height:14.379999999999995px;background:#d9d9d9;"></div>
<div style="left:174.0px;top:399.92px;width:1.0px;height:14.379999999999995px;background:#d9d9d9;"></div>
<div style="left:266.5px;top:399.92px;width:1.0px;height:14.379999999999995px;background:#d9d9d9;"></div>
<div style="left:352.5px;top:399.92px;width:1.0px;height:14.379999999999995px;background:#d9d9d9;"></div>
<div style="left:431.5px;top:399.92px;width:1.0px;height:14.379999999999995px;background:#d9d9d9;"></div>
<div style="left:504.0px;top:399.92px;width:1.0px;height:14.379999999999995px;background:#d9d9d9;"></div>
<div style="left:579.5px;top:399.92px;width:1.0px;height:14.379999999999995px;background:#d9d9d9;"></div>
<div style="left:672.0px;top:399.92px;width:1.0px;height:14.379999999999995px;background:#d9d9d9;"></div>
<div style="left:27.5px;top:414.3px;width:734.0px;height:14.379999999999995px;background:#e2efda;"></div>
<div style="left:78.5px;top:428.68px;width:1.0px;height:14.379999999999995px;background:#d9d9d9;"></div>
<div style="left:174.0px;top:428.68px;width:1.0px;height:14.379999999999995px;background:#d9d9d9;"></div>
<div style="left:266.5px;top:428.68px;width:1.0px;height:14.379999999999995px;background:#d9d9d9;"></div>
<div style="left:352.5px;top:428.68px;width:1.0px;height:14.379999999999995px;background:#d9d9d9;"></div>
<div style="left:431.5px;top:428.68px;width:1.0px;height:14.379999999999995px;background:#d9d9d9;"></div>
<div style="left:504.0px;top:428.68px;width:1.0px;height:14.379999999999995px;background:#d9d9d9;"></div>
<div style="left:579.5px;top:428.68px;width:1.0px;height:14.379999999999995px;background:#d9d9d9;"></div>
<div style="left:672.0px;top:428.68px;width:1.0px;height:14.379999999999995px;background:#d9d9d9;"></div>
<div style="left:27.5px;top:443.06px;width:734.0px;height:14.379999999999995px;background:#e2efda;"></div>
<div style="left:78.5px;top:457.44px;width:1.0px;height:14.380000000000052px;background:#d9d9d9;"></div>
<div style="left:174.0px;top:457.44px;width:1.0px;height:14.380000000000052px;background:#d9d9d9;"></div>
<div style="left:266.5px;top:457.44px;width:1.0px;height:14.380000000000052px;background:#d9d9d9;"></div>
<div style="left:352.5px;top:457.44px;width:1.0px;height:14.380000000000052px;background:#d9d9d9;"></div>
<div style="left:431.5px;top:457.44px;width:1.0px;height:14.380000000000052px;background:#d9d9d9;"></div>
<div style="left:504.0px;top:457.44px;width:1.0px;height:14.380000000000052px;background:#d9d9d9;"></div>
<div style="left:579.5px;top:457.44px;width:1.0px;height:14.380000000000052px;background:#d9d9d9;"></div>
<div style="left:672.0px;top:457.44px;width:1.0px;height:14.380000000000052px;background:#d9d9d9;"></div>
<div style="left:27.5px;top:471.82000000000005px;width:734.0px;height:14.379999999999995px;background:#e2efda;"></div>
<div style="left:78.5px;top:486.20000000000005px;width:1.0px;height:14.379999999999995px;background:#d9d9d9;"></div>
<div style="left:174.0px;top:486.20000000000005px;width:1.0px;height:14.379999999999995px;background:#d9d9d9;"></div>
<div style="left:266.5px;top:486.20000000000005px;width:1.0px;height:14.379999999999995px;background:#d9d9d9;"></div>
<div style="left:352.5px;top:486.20000000000005px;width:1.0px;height:14.379999999999995px;background:#d9d9d9;"></div>
<div style="left:431.5px;top:486.20000000000005px;width:1.0px;height:14.379999999999995px;background:#d9d9d9;"></div>
<div style="left:504.0px;top:486.20000000000005px;width:1.0px;height:14.379999999999995px;background:#d9d9d9;"></div>
<div style="left:579.5px;top:486.20000000000005px;width:1.0px;height:14.379999999999995px;background:#d9d9d9;"></div>
<div style="left:672.0px;top:486.20000000000005px;width:1.0px;height:14.379999999999995px;background:#d9d9d9;"></div>
<div style="left:27.5px;top:500.58000000000004px;width:734.0px;height:14.379999999999995px;background:#e2efda;"></div>
<div style="left:78.5px;top:514.96px;width:1.0px;height:14.379999999999995px;background:#d9d9d9;"></div>
<div style="left:174.0px;top:514.96px;width:1.0px;height:14.379999999999995px;background:#d9d9d9;"></div>
<div style="left:266.5px;top:514.96px;width:1.0px;height:14.379999999999995px;background:#d9d9d9;"></div>
<div style="left:352.5px;top:514.96px;width:1.0px;height:14.379999999999995px;background:#d9d9d9;"></div>
<div style="left:431.5px;top:514.96px;width:1.0px;height:14.379999999999995px;background:#d9d9d9;"></div>
<div style="left:504.0px;top:514.96px;width:1.0px;height:14.379999999999995px;background:#d9d9d9;"></div>
<div style="left:579.5px;top:514.96px;width:1.0px;height:14.379999999999995px;background:#d9d9d9;"></div>
<div style="left:672.0px;top:514.96px;width:1.0px;height:14.379999999999995px;background:#d9d9d9;"></div>
<div style="left:27.5px;top:529.34px;width:734.0px;height:14.379999999999995px;background:#e2efda;"></div>
<div style="left:78.5px;top:543.72px;width:1.0px;height:14.379999999999995px;background:#d9d9d9;"></div>
<div style="left:174.0px;top:543.72px;width:1.0px;height:14.379999999999995px;background:#d9d9d9;"></div>
<div style="left:266.5px;top:543.72px;width:1.0px;height:14.379999999999995px;background:#d9d9d9;"></div>
<div style="left:352.5px;top:543.72px;width:1.0px;height:14.379999999999995px;background:#d9d9d9;"></div>
<div style="left:431.5px;top:543.72px;width:1.0px;height:14.379999999999995px;background:#d9d9d9;"></div>
<div style="left:504.0px;top:543.72px;width:1.0px;height:14.379999999999995px;background:#d9d9d9;"></div>
<div style="left:579.5px;top:543.72px;width:1.0px;height:14.379999999999995px;background:#d9d9d9;"></div>
<div style="left:672.0px;top:543.72px;width:1.0px;height:14.379999999999995px;background:#d9d9d9;"></div>
<div style="left:27.5px;top:558.1px;width:734.0px;height:14.379999999999995px;background:#e2efda;"></div>
<div style="left:27.5px;top:284.28px;width:734.5px;height:1.2000000000000455px;background:#b8d9a3;"></div>
<div style="left:761px;top:270.5px;width:1px;height:14.379999999999995px;background:#b8d9a3;"></div>
<div style="left:27.5px;top:298.65999999999997px;width:734.5px;height:1.2000000000000455px;background:#b8d9a3;"></div>
<div style="left:761px;top:284.88px;width:1px;height:14.379999999999995px;background:#b8d9a3;"></div>
<div style="left:27.5px;top:313.03999999999996px;width:734.5px;height:1.2000000000000455px;background:#b8d9a3;"></div>
<div style="left:761px;top:299.26px;width:1px;height:14.379999999999995px;background:#b8d9a3;"></div>
<div style="left:27.5px;top:327.41999999999996px;width:734.5px;height:1.2000000000000455px;background:#b8d9a3;"></div>
<div style="left:761px;top:313.64px;width:1px;height:14.379999999999995px;background:#b8d9a3;"></div>
<div style="left:27.5px;top:341.79999999999995px;width:734.5px;height:1.2000000000000455px;background:#b8d9a3;"></div>
<div style="left:761px;top:328.02px;width:1px;height:14.379999999999995px;background:#b8d9a3;"></div>
<div style="left:27.5px;top:356.17999999999995px;width:734.5px;height:1.2000000000000455px;background:#b8d9a3;"></div>
<div style="left:761px;top:342.4px;width:1px;height:14.379999999999995px;background:#b8d9a3;"></div>
<div style="left:27.5px;top:370.56px;width:734.5px;height:1.2000000000000455px;background:#b8d9a3;"></div>
<div style="left:761px;top:356.78px;width:1px;height:14.380000000000052px;background:#b8d9a3;"></div>
<div style="left:27.5px;top:384.94px;width:734.5px;height:1.2000000000000455px;background:#b8d9a3;"></div>
<div style="left:761px;top:371.16px;width:1px;height:14.379999999999995px;background:#b8d9a3;"></div>
<div style="left:27.5px;top:399.32px;width:734.5px;height:1.2000000000000455px;background:#b8d9a3;"></div>
<div style="left:761px;top:385.54px;width:1px;height:14.379999999999995px;background:#b8d9a3;"></div>
<div style="left:27.5px;top:413.7px;width:734.5px;height:1.2000000000000455px;background:#b8d9a3;"></div>
<div style="left:761px;top:399.92px;width:1px;height:14.379999999999995px;background:#b8d9a3;"></div>
<div style="left:27.5px;top:428.08px;width:734.5px;height:1.2000000000000455px;background:#b8d9a3;"></div>
<div style="left:761px;top:414.3px;width:1px;height:14.379999999999995px;background:#b8d9a3;"></div>
<div style="left:27.5px;top:442.46px;width:734.5px;height:1.2000000000000455px;background:#b8d9a3;"></div>
<div style="left:761px;top:428.68px;width:1px;height:14.379999999999995px;background:#b8d9a3;"></div>
<div style="left:27.5px;top:456.84px;width:734.5px;height:1.2000000000000455px;background:#b8d9a3;"></div>
<div style="left:761px;top:443.06px;width:1px;height:14.379999999999995px;background:#b8d9a3;"></div>
<div style="left:27.5px;top:471.22px;width:734.5px;height:1.2000000000000455px;background:#b8d9a3;"></div>
<div style="left:761px;top:457.44px;width:1px;height:14.380000000000052px;background:#b8d9a3;"></div>
<div style="left:27.5px;top:485.6px;width:734.5px;height:1.2000000000000455px;background:#b8d9a3;"></div>
<div style="left:761px;top:471.82000000000005px;width:1px;height:14.379999999999995px;background:#b8d9a3;"></div>
<div style="left:27.5px;top:499.98px;width:734.5px;height:1.2000000000000455px;background:#b8d9a3;"></div>
<div style="left:761px;top:486.20000000000005px;width:1px;height:14.379999999999995px;background:#b8d9a3;"></div>
<div style="left:27.5px;top:514.36px;width:734.5px;height:1.2000000000000455px;background:#b8d9a3;"></div>
<div style="left:761px;top:500.58000000000004px;width:1px;height:14.379999999999995px;background:#b8d9a3;"></div>
<div style="left:27.5px;top:528.74px;width:734.5px;height:1.2000000000000455px;background:#b8d9a3;"></div>
<div style="left:761px;top:514.96px;width:1px;height:14.379999999999995px;background:#b8d9a3;"></div>
<div style="left:27.5px;top:543.12px;width:734.5px;height:1.2000000000000455px;background:#b8d9a3;"></div>
<div style="left:761px;top:529.34px;width:1px;height:14.379999999999995px;background:#b8d9a3;"></div>
<div style="left:27.5px;top:557.5px;width:734.5px;height:1.2000000000000455px;background:#b8d9a3;"></div>
<div style="left:761px;top:543.72px;width:1px;height:14.379999999999995px;background:#b8d9a3;"></div>
<div style="left:27.5px;top:571.88px;width:734.5px;height:1.2000000000000455px;background:#b8d9a3;"></div>
<div style="left:761px;top:558.1px;width:1px;height:14.379999999999995px;background:#b8d9a3;"></div>
<span style="left:50.73px;top:273.77px;font-size:11px;line-height:11px;color:#5a5a5a;transform:scaleX(0.9700);">1</span>
<span style="left:81.50px;top:273.77px;font-size:11px;line-height:11px;color:#5a5a5a;transform:scaleX(1.073);">Рубашка</span>
<span style="left:219.33px;top:273.77px;font-size:11px;line-height:11px;color:#5a5a5a;transform:scaleX(0.9300);">14 янв 14</span>
<span style="left:292.41px;top:273.77px;font-size:11px;line-height:11px;color:#5a5a5a;transform:scaleX(0.9300);">1,200 <i class="r">Р</i></span>
<span style="left:393.31px;top:273.77px;font-size:11px;line-height:11px;color:#5a5a5a;transform:scaleX(0.9300);">1,080 <i class="r">Р</i></span>
<span style="left:459.60px;top:273.77px;font-size:11px;line-height:11px;color:#5a5a5a;transform:scaleX(0.9700);">560</span>
<span style="left:529.15px;top:273.77px;font-size:11px;line-height:11px;color:#5a5a5a;transform:scaleX(0.9700);">1,200</span>
<span style="left:613.15px;top:273.77px;font-size:11px;line-height:11px;color:#5a5a5a;transform:scaleX(0.9700);">1,760</span>
<span style="left:702.70px;top:273.77px;font-size:11px;line-height:11px;color:#5a5a5a;transform:scaleX(0.9500);">1,968,000 <i class="r">Р</i></span>
<span style="left:50.73px;top:288.15px;font-size:11px;line-height:11px;color:#5a5a5a;transform:scaleX(0.9700);">2</span>
<span style="left:81.50px;top:288.15px;font-size:11px;line-height:11px;color:#5a5a5a;transform:scaleX(1.060);">Сандалии</span>
<span style="left:219.33px;top:288.15px;font-size:11px;line-height:11px;color:#5a5a5a;transform:scaleX(0.9300);">14 янв 14</span>
<span style="left:292.41px;top:288.15px;font-size:11px;line-height:11px;color:#5a5a5a;transform:scaleX(0.9300);">1,800 <i class="r">Р</i></span>
<span style="left:393.31px;top:288.15px;font-size:11px;line-height:11px;color:#5a5a5a;transform:scaleX(0.9300);">1,620 <i class="r">Р</i></span>
<span style="left:462.57px;top:288.15px;font-size:11px;line-height:11px;color:#5a5a5a;transform:scaleX(0.9700);">54</span>
<span style="left:533.60px;top:288.15px;font-size:11px;line-height:11px;color:#5a5a5a;transform:scaleX(0.9700);">500</span>
<span style="left:617.60px;top:288.15px;font-size:11px;line-height:11px;color:#5a5a5a;transform:scaleX(0.9700);">554</span>
<span style="left:711.41px;top:288.15px;font-size:11px;line-height:11px;color:#5a5a5a;transform:scaleX(0.9500);">907,200 <i class="r">Р</i></span>
<span style="left:50.73px;top:302.53px;font-size:11px;line-height:11px;color:#5a5a5a;transform:scaleX(0.9700);">3</span>
<span style="left:81.50px;top:302.53px;font-size:11px;line-height:11px;color:#5a5a5a;transform:scaleX(0.977);">Платье</span>
<span style="left:219.33px;top:302.53px;font-size:11px;line-height:11px;color:#5a5a5a;transform:scaleX(0.9300);">14 янв 14</span>
<span style="left:296.67px;top:302.53px;font-size:11px;line-height:11px;color:#5a5a5a;transform:scaleX(0.9300);">900 <i class="r">Р</i></span>
<span style="left:401.84px;top:302.53px;font-size:11px;line-height:11px;color:#5a5a5a;transform:scaleX(0.9300);">840 <i class="r">Р</i></span>
<span style="left:462.57px;top:302.53px;font-size:11px;line-height:11px;color:#5a5a5a;transform:scaleX(0.9700);">67</span>
<span style="left:533.60px;top:302.53px;font-size:11px;line-height:11px;color:#5a5a5a;transform:scaleX(0.9700);">300</span>
<span style="left:617.60px;top:302.53px;font-size:11px;line-height:11px;color:#5a5a5a;transform:scaleX(0.9700);">367</span>
<span style="left:711.41px;top:302.53px;font-size:11px;line-height:11px;color:#5a5a5a;transform:scaleX(0.9500);">312,300 <i class="r">Р</i></span>
<span style="left:50.73px;top:316.91px;font-size:11px;line-height:11px;color:#5a5a5a;transform:scaleX(0.9700);">4</span>
<span style="left:81.50px;top:316.91px;font-size:11px;line-height:11px;color:#5a5a5a;transform:scaleX(1.046);">Футболка</span>
<span style="left:219.33px;top:316.91px;font-size:11px;line-height:11px;color:#5a5a5a;transform:scaleX(0.9300);">14 янв 14</span>
<span style="left:296.67px;top:316.91px;font-size:11px;line-height:11px;color:#5a5a5a;transform:scaleX(0.9300);">180 <i class="r">Р</i></span>
<span style="left:401.84px;top:316.91px;font-size:11px;line-height:11px;color:#5a5a5a;transform:scaleX(0.9300);">120 <i class="r">Р</i></span>
<span style="left:459.60px;top:316.91px;font-size:11px;line-height:11px;color:#5a5a5a;transform:scaleX(0.9700);">602</span>
<span style="left:530.63px;top:316.91px;font-size:11px;line-height:11px;color:#5a5a5a;transform:scaleX(0.9700);">1500</span>
<span style="left:613.15px;top:316.91px;font-size:11px;line-height:11px;color:#5a5a5a;transform:scaleX(0.9700);">2,102</span>
<span style="left:711.41px;top:316.91px;font-size:11px;line-height:11px;color:#5a5a5a;transform:scaleX(0.9500);">288,360 <i class="r">Р</i></span>
<span style="left:50.73px;top:331.29px;font-size:11px;line-height:11px;color:#5a5a5a;transform:scaleX(0.9700);">5</span>
<span style="left:81.50px;top:331.29px;font-size:11px;line-height:11px;color:#5a5a5a;transform:scaleX(0.988);">Шорты</span>
<span style="left:219.33px;top:331.29px;font-size:11px;line-height:11px;color:#5a5a5a;transform:scaleX(0.9300);">14 янв 14</span>
<span style="left:292.41px;top:331.29px;font-size:11px;line-height:11px;color:#5a5a5a;transform:scaleX(0.9300);">1,500 <i class="r">Р</i></span>
<span style="left:393.31px;top:331.29px;font-size:11px;line-height:11px;color:#5a5a5a;transform:scaleX(0.9300);">1,380 <i class="r">Р</i></span>
<span style="left:462.57px;top:331.29px;font-size:11px;line-height:11px;color:#5a5a5a;transform:scaleX(0.9700);">67</span>
<span style="left:533.60px;top:331.29px;font-size:11px;line-height:11px;color:#5a5a5a;transform:scaleX(0.9700);">500</span>
<span style="left:617.60px;top:331.29px;font-size:11px;line-height:11px;color:#5a5a5a;transform:scaleX(0.9700);">567</span>
<span style="left:711.41px;top:331.29px;font-size:11px;line-height:11px;color:#5a5a5a;transform:scaleX(0.9500);">790,500 <i class="r">Р</i></span>
<span style="left:50.73px;top:345.67px;font-size:11px;line-height:11px;color:#5a5a5a;transform:scaleX(0.9700);">1</span>
<span style="left:81.50px;top:345.67px;font-size:11px;line-height:11px;color:#5a5a5a;transform:scaleX(1.073);">Рубашка</span>
<span style="left:211.82px;top:345.67px;font-size:11px;line-height:11px;color:#5a5a5a;transform:scaleX(1.0190);">12 фев 14</span>
<span style="left:292.41px;top:345.67px;font-size:11px;line-height:11px;color:#5a5a5a;transform:scaleX(0.9300);">1,200 <i class="r">Р</i></span>
<span style="left:393.31px;top:345.67px;font-size:11px;line-height:11px;color:#5a5a5a;transform:scaleX(0.9300);">1,080 <i class="r">Р</i></span>
<span style="left:459.60px;top:345.67px;font-size:11px;line-height:11px;color:#5a5a5a;transform:scaleX(0.9700);">510</span>
<span style="left:529.15px;top:345.67px;font-size:11px;line-height:11px;color:#5a5a5a;transform:scaleX(0.9700);">1,200</span>
<span style="left:613.15px;top:345.67px;font-size:11px;line-height:11px;color:#5a5a5a;transform:scaleX(0.9700);">1,710</span>
<span style="left:702.70px;top:345.67px;font-size:11px;line-height:11px;color:#5a5a5a;transform:scaleX(0.9500);">1,908,000 <i class="r">Р</i></span>
<span style="left:50.73px;top:360.05px;font-size:11px;line-height:11px;color:#5a5a5a;transform:scaleX(0.9700);">2</span>
<span style="left:81.50px;top:360.05px;font-size:11px;line-height:11px;color:#5a5a5a;transform:scaleX(1.060);">Сандалии</span>
<span style="left:211.82px;top:360.05px;font-size:11px;line-height:11px;color:#5a5a5a;transform:scaleX(1.0190);">12 фев 14</span>
<span style="left:292.41px;top:360.05px;font-size:11px;line-height:11px;color:#5a5a5a;transform:scaleX(0.9300);">1,800 <i class="r">Р</i></span>
<span style="left:393.31px;top:360.05px;font-size:11px;line-height:11px;color:#5a5a5a;transform:scaleX(0.9300);">1,620 <i class="r">Р</i></span>
<span style="left:462.57px;top:360.05px;font-size:11px;line-height:11px;color:#5a5a5a;transform:scaleX(0.9700);">81</span>
<span style="left:533.60px;top:360.05px;font-size:11px;line-height:11px;color:#5a5a5a;transform:scaleX(0.9700);">600</span>
<span style="left:617.60px;top:360.05px;font-size:11px;line-height:11px;color:#5a5a5a;transform:scaleX(0.9700);">681</span>
<span style="left:703.47px;top:360.05px;font-size:11px;line-height:11px;color:#5a5a5a;transform:scaleX(0.9500);">1,117,800 <i class="r">Р</i></span>
<span style="left:50.73px;top:374.43px;font-size:11px;line-height:11px;color:#5a5a5a;transform:scaleX(0.9700);">3</span>
<span style="left:81.50px;top:374.43px;font-size:11px;line-height:11px;color:#5a5a5a;transform:scaleX(0.977);">Платье</span>
<span style="left:211.82px;top:374.43px;font-size:11px;line-height:11px;color:#5a5a5a;transform:scaleX(1.0190);">12 фев 14</span>
<span style="left:296.67px;top:374.43px;font-size:11px;line-height:11px;color:#5a5a5a;transform:scaleX(0.9300);">900 <i class="r">Р</i></span>
<span style="left:401.84px;top:374.43px;font-size:11px;line-height:11px;color:#5a5a5a;transform:scaleX(0.9300);">840 <i class="r">Р</i></span>
<span style="left:462.57px;top:374.43px;font-size:11px;line-height:11px;color:#5a5a5a;transform:scaleX(0.9700);">45</span>
<span style="left:533.60px;top:374.43px;font-size:11px;line-height:11px;color:#5a5a5a;transform:scaleX(0.9700);">300</span>
<span style="left:617.60px;top:374.43px;font-size:11px;line-height:11px;color:#5a5a5a;transform:scaleX(0.9700);">345</span>
<span style="left:711.41px;top:374.43px;font-size:11px;line-height:11px;color:#5a5a5a;transform:scaleX(0.9500);">292,500 <i class="r">Р</i></span>
<span style="left:50.73px;top:388.81px;font-size:11px;line-height:11px;color:#5a5a5a;transform:scaleX(0.9700);">4</span>
<span style="left:81.50px;top:388.81px;font-size:11px;line-height:11px;color:#5a5a5a;transform:scaleX(1.046);">Футболка</span>
<span style="left:211.82px;top:388.81px;font-size:11px;line-height:11px;color:#5a5a5a;transform:scaleX(1.0190);">12 фев 14</span>
<span style="left:296.67px;top:388.81px;font-size:11px;line-height:11px;color:#5a5a5a;transform:scaleX(0.9300);">180 <i class="r">Р</i></span>
<span style="left:401.84px;top:388.81px;font-size:11px;line-height:11px;color:#5a5a5a;transform:scaleX(0.9300);">120 <i class="r">Р</i></span>
<span style="left:459.60px;top:388.81px;font-size:11px;line-height:11px;color:#5a5a5a;transform:scaleX(0.9700);">650</span>
<span style="left:530.63px;top:388.81px;font-size:11px;line-height:11px;color:#5a5a5a;transform:scaleX(0.9700);">1500</span>
<span style="left:613.15px;top:388.81px;font-size:11px;line-height:11px;color:#5a5a5a;transform:scaleX(0.9700);">2,150</span>
<span style="left:711.41px;top:388.81px;font-size:11px;line-height:11px;color:#5a5a5a;transform:scaleX(0.9500);">297,000 <i class="r">Р</i></span>
<span style="left:50.73px;top:403.19px;font-size:11px;line-height:11px;color:#5a5a5a;transform:scaleX(0.9700);">5</span>
<span style="left:81.50px;top:403.19px;font-size:11px;line-height:11px;color:#5a5a5a;transform:scaleX(0.988);">Шорты</span>
<span style="left:211.82px;top:403.19px;font-size:11px;line-height:11px;color:#5a5a5a;transform:scaleX(1.0190);">12 фев 14</span>
<span style="left:292.41px;top:403.19px;font-size:11px;line-height:11px;color:#5a5a5a;transform:scaleX(0.9300);">1,500 <i class="r">Р</i></span>
<span style="left:393.31px;top:403.19px;font-size:11px;line-height:11px;color:#5a5a5a;transform:scaleX(0.9300);">1,380 <i class="r">Р</i></span>
<span style="left:462.57px;top:403.19px;font-size:11px;line-height:11px;color:#5a5a5a;transform:scaleX(0.9700);">69</span>
<span style="left:533.60px;top:403.19px;font-size:11px;line-height:11px;color:#5a5a5a;transform:scaleX(0.9700);">500</span>
<span style="left:617.60px;top:403.19px;font-size:11px;line-height:11px;color:#5a5a5a;transform:scaleX(0.9700);">569</span>
<span style="left:711.41px;top:403.19px;font-size:11px;line-height:11px;color:#5a5a5a;transform:scaleX(0.9500);">793,500 <i class="r">Р</i></span>
<span style="left:50.73px;top:417.57px;font-size:11px;line-height:11px;color:#5a5a5a;transform:scaleX(0.9700);">1</span>
<span style="left:81.50px;top:417.57px;font-size:11px;line-height:11px;color:#5a5a5a;transform:scaleX(1.073);">Рубашка</span>
<span style="left:210.39px;top:417.57px;font-size:11px;line-height:11px;color:#5a5a5a;transform:scaleX(1.0720);">15 мар 14</span>
<span style="left:292.41px;top:417.57px;font-size:11px;line-height:11px;color:#5a5a5a;transform:scaleX(0.9300);">1,200 <i class="r">Р</i></span>
<span style="left:393.31px;top:417.57px;font-size:11px;line-height:11px;color:#5a5a5a;transform:scaleX(0.9300);">1,080 <i class="r">Р</i></span>
<span style="left:459.60px;top:417.57px;font-size:11px;line-height:11px;color:#5a5a5a;transform:scaleX(0.9700);">624</span>
<span style="left:529.15px;top:417.57px;font-size:11px;line-height:11px;color:#5a5a5a;transform:scaleX(0.9700);">1,800</span>
<span style="left:613.15px;top:417.57px;font-size:11px;line-height:11px;color:#5a5a5a;transform:scaleX(0.9700);">2,424</span>
<span style="left:702.70px;top:417.57px;font-size:11px;line-height:11px;color:#5a5a5a;transform:scaleX(0.9500);">2,692,800 <i class="r">Р</i></span>
<span style="left:50.73px;top:431.95px;font-size:11px;line-height:11px;color:#5a5a5a;transform:scaleX(0.9700);">2</span>
<span style="left:81.50px;top:431.95px;font-size:11px;line-height:11px;color:#5a5a5a;transform:scaleX(1.060);">Сандалии</span>
<span style="left:210.39px;top:431.95px;font-size:11px;line-height:11px;color:#5a5a5a;transform:scaleX(1.0720);">15 мар 14</span>
<span style="left:292.41px;top:431.95px;font-size:11px;line-height:11px;color:#5a5a5a;transform:scaleX(0.9300);">2,100 <i class="r">Р</i></span>
<span style="left:393.31px;top:431.95px;font-size:11px;line-height:11px;color:#5a5a5a;transform:scaleX(0.9300);">1,860 <i class="r">Р</i></span>
<span style="left:459.60px;top:431.95px;font-size:11px;line-height:11px;color:#5a5a5a;transform:scaleX(0.9700);">124</span>
<span style="left:533.60px;top:431.95px;font-size:11px;line-height:11px;color:#5a5a5a;transform:scaleX(0.9700);">600</span>
<span style="left:617.60px;top:431.95px;font-size:11px;line-height:11px;color:#5a5a5a;transform:scaleX(0.9700);">724</span>
<span style="left:702.70px;top:431.95px;font-size:11px;line-height:11px;color:#5a5a5a;transform:scaleX(0.9500);">1,376,400 <i class="r">Р</i></span>
<span style="left:50.73px;top:446.33px;font-size:11px;line-height:11px;color:#5a5a5a;transform:scaleX(0.9700);">3</span>
<span style="left:81.50px;top:446.33px;font-size:11px;line-height:11px;color:#5a5a5a;transform:scaleX(0.977);">Платье</span>
<span style="left:210.39px;top:446.33px;font-size:11px;line-height:11px;color:#5a5a5a;transform:scaleX(1.0720);">15 мар 14</span>
<span style="left:292.41px;top:446.33px;font-size:11px;line-height:11px;color:#5a5a5a;transform:scaleX(0.9300);">1,320 <i class="r">Р</i></span>
<span style="left:393.31px;top:446.33px;font-size:11px;line-height:11px;color:#5a5a5a;transform:scaleX(0.9300);">1,260 <i class="r">Р</i></span>
<span style="left:462.57px;top:446.33px;font-size:11px;line-height:11px;color:#5a5a5a;transform:scaleX(0.9700);">85</span>
<span style="left:533.60px;top:446.33px;font-size:11px;line-height:11px;color:#5a5a5a;transform:scaleX(0.9700);">200</span>
<span style="left:617.60px;top:446.33px;font-size:11px;line-height:11px;color:#5a5a5a;transform:scaleX(0.9700);">285</span>
<span style="left:711.41px;top:446.33px;font-size:11px;line-height:11px;color:#5a5a5a;transform:scaleX(0.9500);">364,200 <i class="r">Р</i></span>
<span style="left:50.73px;top:460.71px;font-size:11px;line-height:11px;color:#5a5a5a;transform:scaleX(0.9700);">4</span>
<span style="left:81.50px;top:460.71px;font-size:11px;line-height:11px;color:#5a5a5a;transform:scaleX(1.046);">Футболка</span>
<span style="left:210.39px;top:460.71px;font-size:11px;line-height:11px;color:#5a5a5a;transform:scaleX(1.0720);">15 мар 14</span>
<span style="left:296.67px;top:460.71px;font-size:11px;line-height:11px;color:#5a5a5a;transform:scaleX(0.9300);">180 <i class="r">Р</i></span>
<span style="left:401.84px;top:460.71px;font-size:11px;line-height:11px;color:#5a5a5a;transform:scaleX(0.9300);">120 <i class="r">Р</i></span>
<span style="left:459.60px;top:460.71px;font-size:11px;line-height:11px;color:#5a5a5a;transform:scaleX(0.9700);">723</span>
<span style="left:530.63px;top:460.71px;font-size:11px;line-height:11px;color:#5a5a5a;transform:scaleX(0.9700);">2000</span>
<span style="left:613.15px;top:460.71px;font-size:11px;line-height:11px;color:#5a5a5a;transform:scaleX(0.9700);">2,723</span>
<span style="left:711.41px;top:460.71px;font-size:11px;line-height:11px;color:#5a5a5a;transform:scaleX(0.9500);">370,140 <i class="r">Р</i></span>
<span style="left:50.73px;top:475.09px;font-size:11px;line-height:11px;color:#5a5a5a;transform:scaleX(0.9700);">5</span>
<span style="left:81.50px;top:475.09px;font-size:11px;line-height:11px;color:#5a5a5a;transform:scaleX(0.988);">Шорты</span>
<span style="left:210.39px;top:475.09px;font-size:11px;line-height:11px;color:#5a5a5a;transform:scaleX(1.0720);">15 мар 14</span>
<span style="left:292.41px;top:475.09px;font-size:11px;line-height:11px;color:#5a5a5a;transform:scaleX(0.9300);">1,500 <i class="r">Р</i></span>
<span style="left:393.31px;top:475.09px;font-size:11px;line-height:11px;color:#5a5a5a;transform:scaleX(0.9300);">1,380 <i class="r">Р</i></span>
<span style="left:459.60px;top:475.09px;font-size:11px;line-height:11px;color:#5a5a5a;transform:scaleX(0.9700);">136</span>
<span style="left:533.60px;top:475.09px;font-size:11px;line-height:11px;color:#5a5a5a;transform:scaleX(0.9700);">500</span>
<span style="left:617.60px;top:475.09px;font-size:11px;line-height:11px;color:#5a5a5a;transform:scaleX(0.9700);">636</span>
<span style="left:711.41px;top:475.09px;font-size:11px;line-height:11px;color:#5a5a5a;transform:scaleX(0.9500);">894,000 <i class="r">Р</i></span>
<span style="left:50.73px;top:489.47px;font-size:11px;line-height:11px;color:#5a5a5a;transform:scaleX(0.9700);">1</span>
<span style="left:81.50px;top:489.47px;font-size:11px;line-height:11px;color:#5a5a5a;transform:scaleX(1.073);">Рубашка</span>
<span style="left:213.38px;top:489.47px;font-size:11px;line-height:11px;color:#5a5a5a;transform:scaleX(1.0460);">13 апр 14</span>
<span style="left:292.41px;top:489.47px;font-size:11px;line-height:11px;color:#5a5a5a;transform:scaleX(0.9300);">1,320 <i class="r">Р</i></span>
<span style="left:393.31px;top:489.47px;font-size:11px;line-height:11px;color:#5a5a5a;transform:scaleX(0.9300);">1,200 <i class="r">Р</i></span>
<span style="left:459.60px;top:489.47px;font-size:11px;line-height:11px;color:#5a5a5a;transform:scaleX(0.9700);">782</span>
<span style="left:529.15px;top:489.47px;font-size:11px;line-height:11px;color:#5a5a5a;transform:scaleX(0.9700);">2,000</span>
<span style="left:613.15px;top:489.47px;font-size:11px;line-height:11px;color:#5a5a5a;transform:scaleX(0.9700);">2,782</span>
<span style="left:702.70px;top:489.47px;font-size:11px;line-height:11px;color:#5a5a5a;transform:scaleX(0.9500);">3,432,240 <i class="r">Р</i></span>
<span style="left:50.73px;top:503.85px;font-size:11px;line-height:11px;color:#5a5a5a;transform:scaleX(0.9700);">2</span>
<span style="left:81.50px;top:503.85px;font-size:11px;line-height:11px;color:#5a5a5a;transform:scaleX(1.060);">Сандалии</span>
<span style="left:213.38px;top:503.85px;font-size:11px;line-height:11px;color:#5a5a5a;transform:scaleX(1.0460);">13 апр 14</span>
<span style="left:292.41px;top:503.85px;font-size:11px;line-height:11px;color:#5a5a5a;transform:scaleX(0.9300);">2,100 <i class="r">Р</i></span>
<span style="left:393.31px;top:503.85px;font-size:11px;line-height:11px;color:#5a5a5a;transform:scaleX(0.9300);">1,860 <i class="r">Р</i></span>
<span style="left:459.60px;top:503.85px;font-size:11px;line-height:11px;color:#5a5a5a;transform:scaleX(0.9700);">197</span>
<span style="left:533.60px;top:503.85px;font-size:11px;line-height:11px;color:#5a5a5a;transform:scaleX(0.9700);">800</span>
<span style="left:617.60px;top:503.85px;font-size:11px;line-height:11px;color:#5a5a5a;transform:scaleX(0.9700);">997</span>
<span style="left:702.70px;top:503.85px;font-size:11px;line-height:11px;color:#5a5a5a;transform:scaleX(0.9500);">1,901,700 <i class="r">Р</i></span>
<span style="left:50.73px;top:518.23px;font-size:11px;line-height:11px;color:#5a5a5a;transform:scaleX(0.9700);">3</span>
<span style="left:81.50px;top:518.23px;font-size:11px;line-height:11px;color:#5a5a5a;transform:scaleX(0.977);">Платье</span>
<span style="left:213.38px;top:518.23px;font-size:11px;line-height:11px;color:#5a5a5a;transform:scaleX(1.0460);">13 апр 14</span>
<span style="left:292.41px;top:518.23px;font-size:11px;line-height:11px;color:#5a5a5a;transform:scaleX(0.9300);">1,320 <i class="r">Р</i></span>
<span style="left:393.31px;top:518.23px;font-size:11px;line-height:11px;color:#5a5a5a;transform:scaleX(0.9300);">1,260 <i class="r">Р</i></span>
<span style="left:459.60px;top:518.23px;font-size:11px;line-height:11px;color:#5a5a5a;transform:scaleX(0.9700);">183</span>
<span style="left:533.60px;top:518.23px;font-size:11px;line-height:11px;color:#5a5a5a;transform:scaleX(0.9700);">200</span>
<span style="left:617.60px;top:518.23px;font-size:11px;line-height:11px;color:#5a5a5a;transform:scaleX(0.9700);">383</span>
<span style="left:711.41px;top:518.23px;font-size:11px;line-height:11px;color:#5a5a5a;transform:scaleX(0.9500);">493,560 <i class="r">Р</i></span>
<span style="left:50.73px;top:532.61px;font-size:11px;line-height:11px;color:#5a5a5a;transform:scaleX(0.9700);">4</span>
<span style="left:81.50px;top:532.61px;font-size:11px;line-height:11px;color:#5a5a5a;transform:scaleX(1.046);">Футболка</span>
<span style="left:213.38px;top:532.61px;font-size:11px;line-height:11px;color:#5a5a5a;transform:scaleX(1.0460);">13 апр 14</span>
<span style="left:296.67px;top:532.61px;font-size:11px;line-height:11px;color:#5a5a5a;transform:scaleX(0.9300);">180 <i class="r">Р</i></span>
<span style="left:401.84px;top:532.61px;font-size:11px;line-height:11px;color:#5a5a5a;transform:scaleX(0.9300);">120 <i class="r">Р</i></span>
<span style="left:459.60px;top:532.61px;font-size:11px;line-height:11px;color:#5a5a5a;transform:scaleX(0.9700);">615</span>
<span style="left:530.63px;top:532.61px;font-size:11px;line-height:11px;color:#5a5a5a;transform:scaleX(0.9700);">2000</span>
<span style="left:613.15px;top:532.61px;font-size:11px;line-height:11px;color:#5a5a5a;transform:scaleX(0.9700);">2,615</span>
<span style="left:711.41px;top:532.61px;font-size:11px;line-height:11px;color:#5a5a5a;transform:scaleX(0.9500);">350,700 <i class="r">Р</i></span>
<span style="left:50.73px;top:546.99px;font-size:11px;line-height:11px;color:#5a5a5a;transform:scaleX(0.9700);">5</span>
<span style="left:81.50px;top:546.99px;font-size:11px;line-height:11px;color:#5a5a5a;transform:scaleX(0.988);">Шорты</span>
<span style="left:213.38px;top:546.99px;font-size:11px;line-height:11px;color:#5a5a5a;transform:scaleX(1.0460);">13 апр 14</span>
<span style="left:292.41px;top:546.99px;font-size:11px;line-height:11px;color:#5a5a5a;transform:scaleX(0.9300);">1,200 <i class="r">Р</i></span>
<span style="left:393.31px;top:546.99px;font-size:11px;line-height:11px;color:#5a5a5a;transform:scaleX(0.9300);">1,020 <i class="r">Р</i></span>
<span style="left:459.60px;top:546.99px;font-size:11px;line-height:11px;color:#5a5a5a;transform:scaleX(0.9700);">267</span>
<span style="left:530.63px;top:546.99px;font-size:11px;line-height:11px;color:#5a5a5a;transform:scaleX(0.9700);">1200</span>
<span style="left:613.15px;top:546.99px;font-size:11px;line-height:11px;color:#5a5a5a;transform:scaleX(0.9700);">1,467</span>
<span style="left:702.70px;top:546.99px;font-size:11px;line-height:11px;color:#5a5a5a;transform:scaleX(0.9500);">1,544,400 <i class="r">Р</i></span>
<span style="left:50.73px;top:561.37px;font-size:11px;line-height:11px;color:#5a5a5a;transform:scaleX(0.9700);">1</span>
<span style="left:81.50px;top:561.37px;font-size:11px;line-height:11px;color:#5a5a5a;transform:scaleX(1.073);">Рубашка</span>
<span style="left:214.18px;top:561.37px;font-size:11px;line-height:11px;color:#5a5a5a;">14 мая 14</span>
<span style="left:292.41px;top:561.37px;font-size:11px;line-height:11px;color:#5a5a5a;transform:scaleX(0.9300);">1,320 <i class="r">Р</i></span>
<span style="left:393.31px;top:561.37px;font-size:11px;line-height:11px;color:#5a5a5a;transform:scaleX(0.9300);">1,200 <i class="r">Р</i></span>
<span style="left:459.60px;top:561.37px;font-size:11px;line-height:11px;color:#5a5a5a;transform:scaleX(0.9700);">678</span>
<span style="left:530.63px;top:561.37px;font-size:11px;line-height:11px;color:#5a5a5a;transform:scaleX(0.9700);">2000</span>
<span style="left:613.15px;top:561.37px;font-size:11px;line-height:11px;color:#5a5a5a;transform:scaleX(0.9700);">2,678</span>
<span style="left:702.70px;top:561.37px;font-size:11px;line-height:11px;color:#5a5a5a;transform:scaleX(0.9500);">3,204,960 <i class="r">Р</i></span>
<div style="left:6px;top:565.5px;width:789px;height:22.5px;background:#f4f4f4;"></div>
<div style="left:6px;top:565px;width:770px;height:1px;background:#d4d4d4;"></div>
<svg style="position:absolute;left:26.5px;top:573.5px" width="4.5" height="7" viewBox="0 0 4.5 7"><path d="M4.5 0V7L0 3.5Z" fill="#c8c8c8"/></svg>
<svg style="position:absolute;left:48px;top:573.5px" width="4.5" height="7" viewBox="0 0 4.5 7"><path d="M0 0V7L4.5 3.5Z" fill="#c8c8c8"/></svg>
<div style="left:83.4px;top:565.5px;width:131.1px;height:19.5px;background:linear-gradient(#ffffff 10%,#f9d0b8);border-left:1px solid #d0d0d0;border-right:1px solid #d0d0d0;"></div>
<div style="left:83.4px;top:583.5px;width:131.1px;height:1.5px;background:#217346;"></div>
<span style="left:93.00px;top:568.04px;font-size:12px;line-height:12px;color:#217346;font-weight:bold;transform:scaleX(1.0537);">ИсходнаяТаблица</span>
<svg style="position:absolute;left:240px;top:569px" width="15" height="15" viewBox="0 0 15 15"><circle cx="7.5" cy="7.5" r="6.5" fill="none" stroke="#777" stroke-width="1.2"/><path d="M7.5 3.5v8M3.5 7.5h8" stroke="#777" stroke-width="1.4"/></svg>
<div style="left:650.8px;top:572.5px;width:1.400000000000091px;height:1.3999999999999773px;background:#aaa;"></div>
<div style="left:650.8px;top:576px;width:1.400000000000091px;height:1.3999999999999773px;background:#aaa;"></div>
<div style="left:650.8px;top:579.5px;width:1.400000000000091px;height:1.3999999999999773px;background:#aaa;"></div>
<div style="left:664.5px;top:569.5px;width:111.5px;height:14.5px;background:#ececec;"></div>
<div style="left:664.5px;top:569.5px;width:14.5px;height:14.5px;background:#fff;border:1px solid #d0d0d0;"></div>
<svg style="position:absolute;left:668.8px;top:573.5px" width="4.5" height="6.5" viewBox="0 0 4.5 6.5"><path d="M4.5 0V6.5L0 3.25Z" fill="#777"/></svg>
<div style="left:679px;top:569.5px;width:57px;height:14.5px;background:#fff;border:1px solid #c8c8c8;"></div>
<div style="left:762.5px;top:569.5px;width:13.5px;height:14.5px;background:#fff;border:1px solid #d0d0d0;"></div>
<svg style="position:absolute;left:767.3px;top:573.5px" width="4.5" height="6.5" viewBox="0 0 4.5 6.5"><path d="M0 0V6.5L4.5 3.25Z" fill="#777"/></svg>
<div style="left:779px;top:176px;width:13.799999999999955px;height:390px;background:#f4f4f4;"></div>
<div style="left:779px;top:177.5px;width:14px;height:14.0px;background:#fff;border:1px solid #d0d0d0;"></div>
<svg style="position:absolute;left:783px;top:182px" width="7" height="4" viewBox="0 0 7 4"><path d="M0 4h7L3.5 0Z" fill="#777"/></svg>
<div style="left:779px;top:192px;width:14px;height:148px;background:#fff;border:1px solid #c8c8c8;"></div>
<div style="left:779px;top:552px;width:14px;height:14px;background:#fff;border:1px solid #d0d0d0;"></div>
<svg style="position:absolute;left:783px;top:557px" width="7" height="4" viewBox="0 0 7 4"><path d="M0 0h7L3.5 4Z" fill="#777"/></svg>
<div style="left:6px;top:587.5px;width:789px;height:18.0px;background:#217346;"></div>
<span style="left:10.80px;top:592.87px;font-size:9.6px;line-height:9.6px;color:#eef4f0;transform:scaleX(0.9643);">ГОТОВО</span>
<span style="left:444.50px;top:592.87px;font-size:9.6px;line-height:9.6px;color:#eef4f0;transform:scaleX(0.9994);">КОЛИЧЕСТВО: 9</span>
<div style="left:534.5px;top:587.5px;width:31.5px;height:18.0px;background:#19613b;"></div>
<svg style="position:absolute;left:544px;top:592px" width="11" height="10" viewBox="0 0 11 10"><rect x="0.5" y="0.5" width="10" height="9" fill="none" stroke="#fff" stroke-width="0.9"/><path d="M3.8 0.5v9M7.2 0.5v9M0.5 3.5h10M0.5 6.5h10" stroke="#fff" stroke-width="0.8"/></svg>
<svg style="position:absolute;left:575.5px;top:592px" width="11" height="10" viewBox="0 0 11 10"><rect x="0.5" y="0.5" width="10" height="9" fill="none" stroke="#dfe9e2" stroke-width="0.9"/><path d="M2.7 2v6M8.3 2v6" stroke="#dfe9e2" stroke-width="0.9"/><path d="M4.5 3h2M4.5 5h2M4.5 7h2" stroke="#cfdcd3" stroke-width="0.7"/></svg>
<svg style="position:absolute;left:607px;top:592px" width="11" height="10" viewBox="0 0 11 10"><rect x="0.5" y="0.5" width="10" height="9" fill="none" stroke="#fff" stroke-width="0.9"/><rect x="0.5" y="0.5" width="4.5" height="5.5" fill="#fff"/><rect x="6" y="0.5" width="2.5" height="5.5" fill="#fff"/></svg>
<div style="left:632px;top:596.6px;width:6.600000000000023px;height:1.7999999999999545px;background:#fff;"></div>
<div style="left:642px;top:597px;width:94px;height:1px;background:#d8e8dd;"></div>
<div style="left:679.5px;top:592.7px;width:4.0px;height:9.299999999999955px;background:#fff;"></div>
<div style="left:688.5px;top:595px;width:1.0px;height:5px;background:#d8e8dd;"></div>
<div style="left:740px;top:597px;width:8px;height:1.7999999999999545px;background:#fff;"></div>
<div style="left:743.1px;top:593.8px;width:1.7999999999999545px;height:8.200000000000045px;background:#fff;"></div>
<span style="left:760.00px;top:592.87px;font-size:9.6px;line-height:9.6px;color:#eef4f0;transform:scaleX(0.9368);">85%</span>
</body></html>
